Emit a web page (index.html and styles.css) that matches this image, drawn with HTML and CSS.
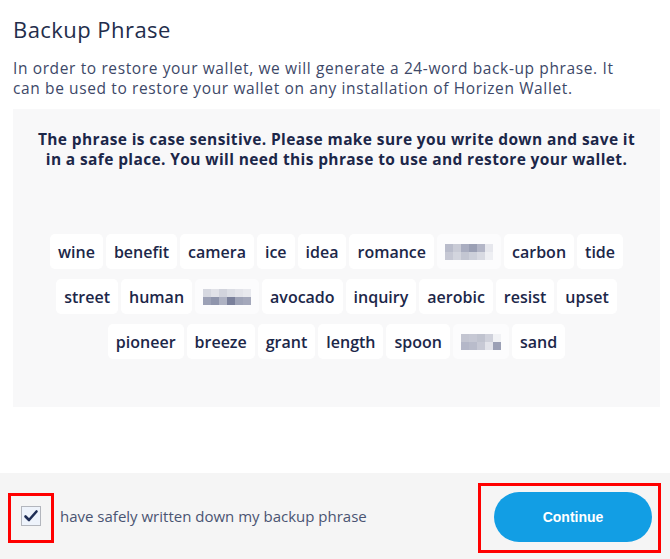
FILE: index.html
```html
<!DOCTYPE html>
<html>
<head>
<meta charset="utf-8">
<link rel="stylesheet" href="styles.css">
</head>
<body>
<div class="page">
  <main class="content">
    <h1 class="title">Backup Phrase</h1>
    <p class="intro">In order to restore your wallet, we will generate a 24-word back-up phrase. It can be used to restore your wallet on any installation of Horizen Wallet.</p>
    <section class="panel">
      <p class="warning">The phrase is case sensitive. Please make sure you write down and save it in a safe place. You will need this phrase to use and restore your wallet.</p>
      <div class="words">
        <span class="chip">wine</span>
        <span class="chip">benefit</span>
        <span class="chip">camera</span>
        <span class="chip">ice</span>
        <span class="chip">idea</span>
        <span class="chip">romance</span>
        <span class="chip chip-hidden"><svg class="pix" width="48" height="16" viewBox="0 0 6 2" shape-rendering="crispEdges"><rect x="0" y="0" width="1" height="1" fill="#b9bccb"/><rect x="1" y="0" width="1" height="1" fill="#c9cbd6"/><rect x="2" y="0" width="1" height="1" fill="#a9adc0"/><rect x="3" y="0" width="1" height="1" fill="#9a9fb4"/><rect x="4" y="0" width="1" height="1" fill="#b3b6c7"/><rect x="5" y="0" width="1" height="1" fill="#e6e7ed"/><rect x="0" y="1" width="1" height="1" fill="#c6c8d4"/><rect x="1" y="1" width="1" height="1" fill="#d3d5de"/><rect x="2" y="1" width="1" height="1" fill="#c3c6d2"/><rect x="3" y="1" width="1" height="1" fill="#cdd0da"/><rect x="4" y="1" width="1" height="1" fill="#d8dae2"/><rect x="5" y="1" width="1" height="1" fill="#eeeff3"/></svg></span>
        <span class="chip">carbon</span>
        <span class="chip">tide</span>
      </div>
      <div class="words">
        <span class="chip">street</span>
        <span class="chip">human</span>
        <span class="chip chip-hidden"><svg class="pix" width="48" height="16" viewBox="0 0 6 2" shape-rendering="crispEdges"><rect x="0" y="0" width="1" height="1" fill="#d6d8e0"/><rect x="1" y="0" width="1" height="1" fill="#e1e2e8"/><rect x="2" y="0" width="1" height="1" fill="#d2d4dd"/><rect x="3" y="0" width="1" height="1" fill="#dcdee5"/><rect x="4" y="0" width="1" height="1" fill="#e3e4ea"/><rect x="5" y="0" width="1" height="1" fill="#e8e9ee"/><rect x="0" y="1" width="1" height="1" fill="#9ca1b6"/><rect x="1" y="1" width="1" height="1" fill="#8f95ac"/><rect x="2" y="1" width="1" height="1" fill="#aeb2c3"/><rect x="3" y="1" width="1" height="1" fill="#7a809b"/><rect x="4" y="1" width="1" height="1" fill="#9ea3b7"/><rect x="5" y="1" width="1" height="1" fill="#a4a8bb"/></svg></span>
        <span class="chip">avocado</span>
        <span class="chip">inquiry</span>
        <span class="chip">aerobic</span>
        <span class="chip">resist</span>
        <span class="chip">upset</span>
      </div>
      <div class="words">
        <span class="chip">pioneer</span>
        <span class="chip">breeze</span>
        <span class="chip">grant</span>
        <span class="chip">length</span>
        <span class="chip">spoon</span>
        <span class="chip chip-hidden"><svg class="pix" width="40" height="16" viewBox="0 0 5 2" shape-rendering="crispEdges"><rect x="0" y="0" width="1" height="1" fill="#c3c5d1"/><rect x="1" y="0" width="1" height="1" fill="#c6c8d4"/><rect x="2" y="0" width="1" height="1" fill="#c0c3cf"/><rect x="3" y="0" width="1" height="1" fill="#cfd1db"/><rect x="4" y="0" width="1" height="1" fill="#f1f2f5"/><rect x="0" y="1" width="1" height="1" fill="#b4b7c8"/><rect x="1" y="1" width="1" height="1" fill="#b9bccb"/><rect x="2" y="1" width="1" height="1" fill="#c7c9d5"/><rect x="3" y="1" width="1" height="1" fill="#e2e3ea"/><rect x="4" y="1" width="1" height="1" fill="#9ba0b5"/></svg></span>
        <span class="chip">sand</span>
      </div>
    </section>
  </main>
  <footer class="footer">
    <label class="agree">
      <span class="mark-box">
        <span class="checkbox">
          <svg width="16" height="16" viewBox="0 0 16 16"><path d="M2.5 8.5 L6 12 L13.5 3.5" fill="none" stroke="#1f2d55" stroke-width="2.6" stroke-linecap="round" stroke-linejoin="round"/></svg>
        </span>
      </span>
      <span class="agree-text">have safely written down my backup phrase</span>
    </label>
    <div class="mark-box mark-btn">
      <button class="btn">Continue</button>
    </div>
  </footer>
</div>
</body>
</html>
```
FILE: styles.css
```css
* { box-sizing: border-box; }
html, body { margin: 0; padding: 0; background: #ffffff; }
body { font-family: "Open Sans", "Noto Sans", sans-serif; color: #1f2a4d; }
.page { display: flex; flex-direction: column; height: 559px; width: 670px; }
.content { padding: 0 10px 0 13px; }
.title {
  margin: 15px 0 0 0;
  font-size: 22px;
  font-weight: 400;
  color: #232d4b;
  line-height: 28px;
  letter-spacing: 0.45px;
}
.intro {
  margin: 16px 0 0 0;
  max-width: 618px;
  font-size: 15.5px;
  line-height: 19.5px;
  color: #3d4868;
  letter-spacing: 0.62px;
}
.panel {
  margin-top: 11px;
  background: #f8f8f9;
  height: 298px;
  width: 647px;
  padding: 20px 10px 0 10px;
}
.warning {
  margin: 0 auto;
  width: 612px;
  text-align: center;
  font-weight: 700;
  font-size: 15.5px;
  line-height: 20px;
  color: #1c2749;
  letter-spacing: 0.38px;
}
.words {
  display: flex;
  justify-content: center;
  gap: 3px;
  margin-top: 10px;
}
.panel .warning + .words { margin-top: 65px; }
.chip {
  height: 35px;
  padding: 0 8px;
  background: #ffffff;
  border-radius: 5px;
  display: flex;
  align-items: center;
  font-size: 16px;
  font-weight: 600;
  color: #1c2749;
}
.chip-hidden { padding: 0 8px; background: #fcfcfd; }
.pix { display: block; }
.footer {
  margin-top: auto;
  height: 86px;
  background: #f5f5f5;
  display: flex;
  align-items: center;
  justify-content: space-between;
  padding: 0 9px 0 8px;
}
.agree { display: flex; align-items: center; gap: 6px; }
.mark-box { border: 3px solid #ff0000; }
.agree .mark-box { padding: 10px 10px 14px 10px; margin-top: 4px; }
.checkbox {
  width: 20px; height: 20px;
  border: 1px solid #b3b6bd;
  background: #eef3fb;
  display: flex; align-items: center; justify-content: center;
}
.agree-text { font-size: 15px; color: #4a5472; letter-spacing: 0; }
.mark-btn { padding: 6px 6px 8px 13px; margin-top: 4px; }
.btn {
  width: 158px; height: 50px;
  border: none;
  border-radius: 25px;
  background: #129ee4;
  color: #ffffff;
  font-family: "Liberation Sans", Arial, sans-serif;
  font-weight: 700;
  font-size: 14px;
  display: block;
}
```
